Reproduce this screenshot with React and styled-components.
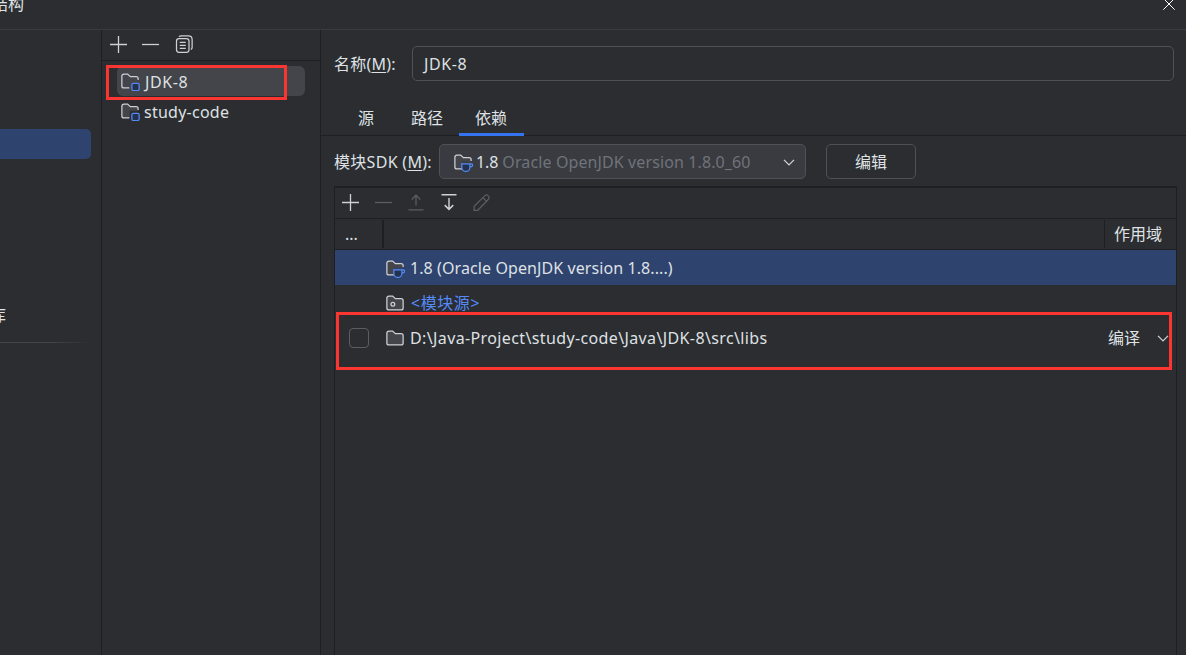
import React from "react";
import styled, { createGlobalStyle } from "styled-components";

const c = {
  bg: "#2b2d30",
  line: "#1e1f22",
  border: "#4e5157",
  text: "#dfe1e5",
  dim: "#6f737a",
  icon: "#ced0d6",
  blue: "#548af7",
  select: "#2e436e",
  mark: "#fb3532",
};

const Global = createGlobalStyle`
  * { box-sizing: border-box; }
  body {
    margin: 0;
    background: ${c.bg};
    color: ${c.text};
    font: 16px/22px "Noto Sans", "Noto Sans CJK SC", sans-serif;
    overflow: hidden;
  }
`;

const Window = styled.div`
  display: flex;
  flex-direction: column;
  width: 1186px;
  height: 655px;
  overflow: hidden;
  background: ${c.bg};
`;

const TitleBar = styled.header`
  display: flex;
  justify-content: space-between;
  height: 30px;
  border-bottom: 1px solid #393b40;
  padding: 0 11px 0 0;
`;

const Title = styled.div`
  margin: -7px 0 0 -8px;
`;

const CloseIcon = styled.svg`
  width: 12px;
  height: 12px;
  margin-top: -2px;
`;

const Body = styled.div`
  display: flex;
  flex: 1;
  min-height: 0;
`;

const Nav = styled.nav`
  width: 102px;
  border-right: 1px solid ${c.line};
  padding-top: 99px;
`;

const NavSelected = styled.div`
  width: 91px;
  height: 30px;
  border-radius: 0 5px 5px 0;
  background: ${c.select};
`;

const NavItem = styled.div`
  margin: 145px 0 0 -10px;
  height: 22px;
`;

const NavDivider = styled.div`
  height: 1px;
  width: 92px;
  margin-top: 16px;
  background: linear-gradient(to right, #43454a 55%, transparent);
`;

const Modules = styled.aside`
  width: 219px;
  border-right: 1px solid ${c.line};
`;

const ModuleToolbar = styled.div`
  display: flex;
  align-items: center;
  height: 31px;
  gap: 12px;
  padding: 0 0 3px 6px;
  border-bottom: 1px solid ${c.line};

  svg:last-child {
    margin-left: 2px;
  }
`;

const ModuleList = styled.div`
  position: relative;
  padding: 5px 15px 0;
`;

const ModuleRow = styled.div`
  display: flex;
  align-items: center;
  gap: 4px;
  height: 30px;
  padding-left: 3px;
  border-radius: 6px;
  background: ${(p) => (p.$selected ? "#43454a" : "transparent")};
`;

const Highlight = styled.div`
  position: absolute;
  left: ${(p) => p.$x}px;
  top: ${(p) => p.$y}px;
  width: ${(p) => p.$w}px;
  height: ${(p) => p.$h}px;
  border: 3px solid ${c.mark};
  pointer-events: none;
`;

const Label = styled.span`
  white-space: pre;
  letter-spacing: ${(p) => p.$track || 0}px;
  color: ${(p) => p.$color || "inherit"};
  padding: ${(p) => p.$drop || 0}px 0 0 ${(p) => p.$indent || 0}px;
`;

const Mnemonic = styled.span`
  text-decoration: underline;
  text-underline-offset: 2px;
`;

const Main = styled.main`
  display: flex;
  flex-direction: column;
  flex: 1;
  min-width: 0;
`;

const NameRow = styled.div`
  display: flex;
  align-items: center;
  padding: 16px 12px 0 13px;
  height: 51px;
`;

const FieldLabel = styled.div`
  width: ${(p) => p.$w}px;
  flex: none;
  white-space: pre;
  letter-spacing: ${(p) => p.$track || 0}px;
`;

const Input = styled.div`
  display: flex;
  align-items: center;
  flex: 1;
  height: 35px;
  padding-left: 10px;
  border: 1px solid ${c.border};
  border-radius: 5px;
`;

const Tabs = styled.div`
  display: flex;
  align-items: flex-end;
  height: 55px;
  padding-left: 21px;
  border-bottom: 1px solid ${c.line};
`;

const Tab = styled.div`
  height: 35px;
  padding: 6px ${(p) => (p.$active ? 17 : 16)}px 0 16px;
  margin: 0 0 -1px ${(p) => p.$gap || 0}px;
  border-bottom: 3px solid ${(p) => (p.$active ? "#3574f0" : "transparent")};
`;

const SdkRow = styled.div`
  display: flex;
  align-items: center;
  height: 50px;
  padding: 1px 0 0 13px;
`;

const Combo = styled.div`
  display: flex;
  align-items: center;
  width: 367px;
  height: 35px;
  padding: 0 6px 0 13px;
  border: 1px solid ${c.border};
  border-radius: 5px;
  background: #393b40;
`;

const Spacer = styled.div`
  flex: 1;
`;

const Button = styled.div`
  display: flex;
  align-items: center;
  justify-content: center;
  width: 90px;
  height: 35px;
  margin-left: 20px;
  border: 1px solid ${c.border};
  border-radius: 5px;
`;

const Table = styled.section`
  position: relative;
  flex: 1;
  margin: 0 9px 0 13px;
  border: 1px solid ${c.line};
  border-top-width: 2px;
  border-bottom: 0;
`;

const TableToolbar = styled.div`
  display: flex;
  align-items: center;
  height: 31px;
  gap: 13px;
  padding: 0 0 3px 5px;
  border-bottom: 1px solid ${c.line};
`;

const HeaderRow = styled.div`
  display: flex;
  align-items: center;
  height: 31px;
  border-bottom: 1px solid ${c.line};
`;

const HeaderCell = styled.div`
  flex: ${(p) => (p.$w ? `0 0 ${p.$w}px` : "1")};
  height: 28px;
  line-height: 28px;
  padding-left: ${(p) => p.$pad || 0}px;
  border-right: ${(p) => p.$rule || 0}px solid ${c.line};
`;

const DepRow = styled.div`
  display: flex;
  align-items: center;
  height: 35px;
  background: ${(p) => (p.$selected ? c.select : "transparent")};
`;

const CheckCell = styled.div`
  flex: 0 0 50px;
  padding-left: 14px;
`;

const Checkbox = styled.div`
  width: 20px;
  height: 20px;
  border: 1px solid #5a5d63;
  border-radius: 4px;
`;

const DepName = styled.div`
  display: flex;
  align-items: center;
  flex: 1;
  gap: 5px;
`;

const Scope = styled.div`
  display: flex;
  align-items: center;
  gap: 13px;
  width: 68px;
`;

const Glyph = styled.svg`
  flex: none;
  width: 20px;
  height: 20px;
  fill: none;
  stroke: ${(p) => (p.$off ? "#5a5d63" : c.icon)};
  stroke-width: 1;
`;

const FOLDER =
  "M1.5 4.1C1.5 3.2 2.2 2.5 3.1 2.5H6.1L8.3 4.5H12.9C13.8 4.5 14.5 5.2 14.5 6.1V11.9C14.5 12.8 13.8 13.5 12.9 13.5H3.1C2.2 13.5 1.5 12.8 1.5 11.9Z";
const FOLDER_OPEN_CORNER =
  "M7.5 13.5H3.1C2.2 13.5 1.5 12.8 1.5 11.9V4.1C1.5 3.2 2.2 2.5 3.1 2.5H6.1L8.3 4.5H12.9C13.8 4.5 14.5 5.2 14.5 6.1V7.2";
const FOLDER_FILL = "M1.5 2.5H6.1L8.3 4.5H14.5V7.8H7.8V13.5H1.5Z";

const Plus = () => (
  <Glyph viewBox="0 0 20 20"><path d="M10.5 2v17M2 10.5h17" strokeWidth="1.3" /></Glyph>
);
const Minus = ({ off }) => (
  <Glyph viewBox="0 0 20 20" $off={off}><path d="M2 10.5h17" strokeWidth="1.3" /></Glyph>
);
const Copy = () => (
  <Glyph viewBox="0 0 16 16">
    <path d="M4 2.2Q4.7 1.5 5.8 1.5H11.5Q14.5 1.5 14.5 4.5V10.5Q14.5 11.8 13.5 12.4" />
    <rect x="2" y="3.6" width="10" height="11" rx="2" />
    <path d="M4.6 6.6h4.8M4.6 9h4.8M4.6 11.4h4.8" />
  </Glyph>
);
const Up = () => (
  <Glyph viewBox="0 0 16 16" $off><path d="M8 10.8V2.9M4.6 6L8 2.6l3.4 3.4M2 14.3h12" /></Glyph>
);
const Down = () => (
  <Glyph viewBox="0 0 16 16"><path d="M8 4.8v9M4.6 10.5L8 13.9l3.4-3.4M2 2.2h12" strokeWidth="1.15" /></Glyph>
);
const Pencil = () => (
  <Glyph viewBox="0 0 16 16" $off>
    <path d="M1.7 14.6V11.5L10.3 2.9Q11.6 1.8 12.8 2.9L13.2 3.3Q14.3 4.4 13.2 5.8L4.6 14.6ZM8.8 4.6l2.9 2.9" />
  </Glyph>
);
const ModuleIcon = () => (
  <Glyph viewBox="0 0 16 16">
    <path d={FOLDER_FILL} fill="#43454a" stroke="none" />
    <path d={FOLDER_OPEN_CORNER} />
    <rect x="9.5" y="9.8" width="5.8" height="5.8" rx="1.2" stroke={c.blue} fill="#25324d" />
  </Glyph>
);
const SdkIcon = () => (
  <Glyph viewBox="0 0 16 16">
    <path d={FOLDER_FILL} fill="#43454a" stroke="none" />
    <path d={FOLDER_OPEN_CORNER} />
    <path d="M7 9.5h6.5v2.8a3.2 3.2 0 0 1-6.4 0zM13.5 9.5h1q1.2 0 1.2.9q0 1.5-2.2 1.6" stroke={c.blue} fill="#25324d" />
  </Glyph>
);
const Folder = ({ source }) => (
  <Glyph viewBox="0 0 16 16">
    <path d={FOLDER} fill="#43454a" />
    {source && <circle cx="6.3" cy="9" r="1.5" />}
  </Glyph>
);
const Chevron = () => (
  <Glyph viewBox="0 0 16 16"><path d="M4 6.3L8 10.3l4-4" strokeWidth="1.1" /></Glyph>
);

export default function App() {
  return (
    <Window>
      <Global />
      <TitleBar>
        <Title>结构</Title>
        <CloseIcon viewBox="0 0 12 12" stroke="#fff" strokeWidth="1">
          <path d="M.3 .3l11.4 11.4M11.7 .3l-11.4 11.4" />
        </CloseIcon>
      </TitleBar>
      <Body>
        <Nav>
          <NavSelected />
          <NavItem>库</NavItem>
          <NavDivider />
        </Nav>
        <Modules>
          <ModuleToolbar><Plus /><Minus /><Copy /></ModuleToolbar>
          <ModuleList>
            <ModuleRow $selected><ModuleIcon /><Label $track={0.6} $indent={1} $drop={2}>JDK-8</Label></ModuleRow>
            <ModuleRow><ModuleIcon /><Label $track={0.25} $drop={2}>study-code</Label></ModuleRow>
            <Highlight $x={4} $y={4} $w={181} $h={35} />
          </ModuleList>
        </Modules>
        <Main>
          <NameRow>
            <FieldLabel $w={78} $track={0.2}>名称(<Mnemonic>M</Mnemonic>):</FieldLabel>
            <Input><Label $track={0.6} $indent={1}>JDK-8</Label></Input>
          </NameRow>
          <Tabs>
            <Tab>源</Tab>
            <Tab $gap={5}>路径</Tab>
            <Tab $active>依赖</Tab>
          </Tabs>
          <SdkRow>
            <FieldLabel $w={105} $track={0.3}>模块SDK (<Mnemonic>M</Mnemonic>):</FieldLabel>
            <Combo>
              <SdkIcon />
              <Label $indent={3} $track={-0.1}>1.8 </Label>
              <Label $color={c.dim} $track={0.11}>Oracle OpenJDK version 1.8.0_60</Label>
              <Spacer />
              <Chevron />
            </Combo>
            <Button>编辑</Button>
          </SdkRow>
          <Table>
            <TableToolbar><Plus /><Minus off /><Up /><Down /><Pencil /></TableToolbar>
            <HeaderRow>
              <HeaderCell $w={49} $pad={10} $rule={2}>...</HeaderCell>
              <HeaderCell $rule={1} />
              <HeaderCell $w={71} $pad={9}>作用域</HeaderCell>
            </HeaderRow>
            <DepRow $selected>
              <CheckCell />
              <DepName><SdkIcon /><Label $track={0.09}>1.8 (Oracle OpenJDK version 1.8....)</Label></DepName>
            </DepRow>
            <DepRow>
              <CheckCell />
              <DepName><Folder source /><Label $color={c.blue} $indent={1} $track={0.5}>&lt;模块源&gt;</Label></DepName>
            </DepRow>
            <DepRow>
              <CheckCell><Checkbox /></CheckCell>
              <DepName><Folder /><Label $track={0.375}>D:\Java-Project\study-code\Java\JDK-8\src\libs</Label></DepName>
              <Scope><Label>编译</Label><Chevron /></Scope>
            </DepRow>
            <Highlight $x={1} $y={124} $w={836} $h={58} />
          </Table>
        </Main>
      </Body>
    </Window>
  );
}
